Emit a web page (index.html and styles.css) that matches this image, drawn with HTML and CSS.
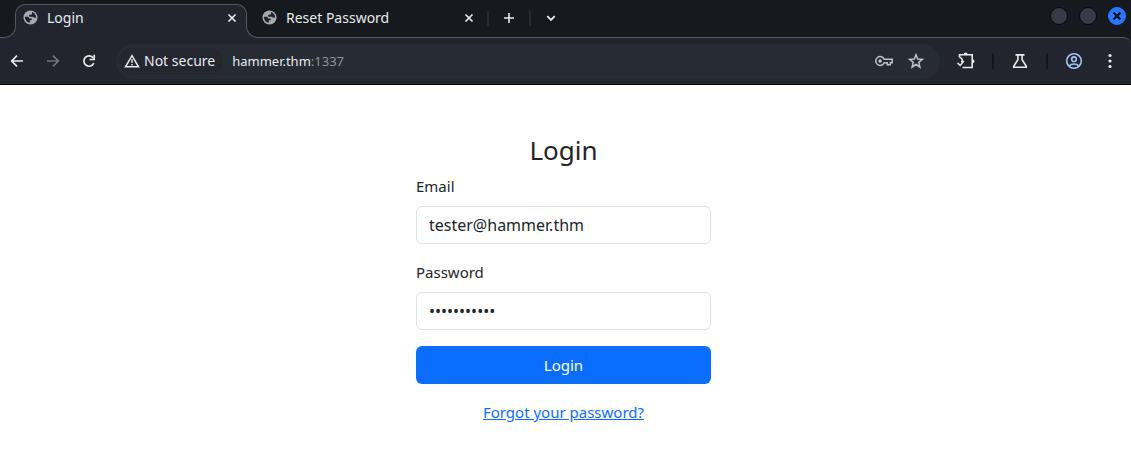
FILE: index.html
```html
<!DOCTYPE html>
<html lang="en">
<head>
<meta charset="utf-8">
<title>Login</title>
<link rel="stylesheet" href="styles.css">
</head>
<body>
<svg class="defs" aria-hidden="true">
  <symbol id="globe" viewBox="0 0 16 16">
    <circle cx="8" cy="8" r="7.500" fill="#a6abb3"/>
    <path d="M2 7.300h2.300c1.500 0 2.200.7 2.200 1.800h2.700v1.700H7.300v2.700C4.500 13.500 2 11 2 7.300z" fill="#20232a"/>
    <path d="M9.600 2.200c2.500.8 4.300 3 4.400 5.500-1 .8-2.600.8-3.300-.5H7.300c-1 0-1.400-1.500-.4-2.100h1.700c.8 0 1-.7 1-1.300z" fill="#20232a"/>
  </symbol>
  <symbol id="close" viewBox="0 0 10 10">
    <path d="M1.500 1.500l7 7M8.500 1.500l-7 7" fill="none" stroke="currentColor" stroke-width="1.700"/>
  </symbol>
</svg>

<header class="browser">
  <div class="tabstrip">
    <div class="tab tab-active">
      <svg class="favicon"><use href="#globe"/></svg>
      <span class="tab-title">Login</span>
      <button class="tab-close" aria-label="Close Login tab"><svg width="10" height="10"><use href="#close"/></svg></button>
    </div>
    <div class="tab">
      <svg class="favicon"><use href="#globe"/></svg>
      <span class="tab-title">Reset Password</span>
      <button class="tab-close" aria-label="Close Reset Password tab"><svg width="10" height="10"><use href="#close"/></svg></button>
    </div>
    <span class="strip-rule"></span>
    <button class="strip-button" aria-label="New tab"><svg width="12" height="12" viewBox="0 0 12 12"><path d="M6 1v10M1 6h10" stroke="currentColor" stroke-width="1.600"/></svg></button>
    <span class="strip-rule"></span>
    <button class="strip-button" aria-label="Search tabs"><svg width="12" height="12" viewBox="0 0 12 12"><path d="M2.300 4.200L6 7.900l3.700-3.700" fill="none" stroke="currentColor" stroke-width="1.800"/></svg></button>
    <div class="window-controls">
      <button class="window-dot" aria-label="Minimize"></button>
      <button class="window-dot" aria-label="Maximize"></button>
      <button class="window-dot window-close" aria-label="Close window"><svg width="10" height="10" viewBox="0 0 10 10"><path d="M1.500 1.500l7 7M8.500 1.500l-7 7" stroke="#0b1220" stroke-width="2.400"/></svg></button>
    </div>
  </div>

  <div class="toolbar">
    <nav class="history">
      <button class="nav-button" aria-label="Back"><svg width="14" height="14" viewBox="0 0 14 14"><path d="M13 7H2M7 1.700L1.700 7 7 12.300" fill="none" stroke="currentColor" stroke-width="1.700"/></svg></button>
      <button class="nav-button nav-disabled" aria-label="Forward"><svg width="14" height="14" viewBox="0 0 14 14"><path d="M1 7h11M7 1.700L12.300 7 7 12.300" fill="none" stroke="currentColor" stroke-width="1.700"/></svg></button>
      <button class="nav-button" aria-label="Reload"><svg width="14" height="14" viewBox="0 0 14 14"><path d="M11.800 9.200A5.200 5.200 0 1 1 11.300 4" fill="none" stroke="currentColor" stroke-width="1.700"/><path d="M12.200.8v4.700H7.600" fill="none" stroke="currentColor" stroke-width="1.700"/></svg></button>
    </nav>
    <div class="omnibox">
      <button class="site-chip">
        <svg width="16" height="14" viewBox="0 0 16 14"><path d="M8 1.700L14.500 12.800h-13z" fill="none" stroke="currentColor" stroke-width="1.500"/><path d="M8 5.300v3.600M8 9.900v1.500" stroke="currentColor" stroke-width="1.400"/></svg>
        Not secure
      </button>
      <span class="url">hammer.thm<span class="port">:1337</span></span>
      <button class="omni-action" aria-label="Passwords"><svg width="18" height="12" viewBox="0 0 18 12"><path d="M9.200 4.300A4.400 4.400 0 1 0 9.200 7.700h3.100v2h3v-2h1.900V4.300z" fill="none" stroke="currentColor" stroke-width="1.500"/><circle cx="5.100" cy="6" r="1.800" fill="currentColor"/></svg></button>
      <button class="omni-action" aria-label="Bookmark"><svg width="16" height="16" viewBox="0 0 16 16"><path d="M8 1.800l1.700 4.300 4.700.3-3.600 3 1.100 4.600L8 11.500 4.100 14l1.100-4.600-3.600-3 4.700-.3z" fill="none" stroke="currentColor" stroke-width="1.500"/></svg></button>
    </div>
    <button class="tool-button" aria-label="Extensions"><svg width="20" height="20" viewBox="0 0 20 20"><path d="M3.500 6.200V3.800h12.700v12.700H6.500" fill="none" stroke="currentColor" stroke-width="1.600"/><path d="M3.500 6.200c2.700.6 3.500 3.400 1.900 5.200M1.500 12l2.700 2.400 3.700-4.300" fill="none" stroke="currentColor" stroke-width="1.600"/><path d="M7.600 3.500a2 2 0 0 1 4 0zM16.500 8.200a2 2 0 0 1 0 4z" fill="currentColor"/></svg></button>
    <span class="tool-rule"></span>
    <button class="tool-button" aria-label="Labs"><svg width="16" height="16" viewBox="0 0 16 16"><path d="M3.500 1.900h9M5.900 2v4.700L1.700 13.300v.9h12.600v-.9L10.100 6.700V2" fill="none" stroke="currentColor" stroke-width="1.600"/></svg></button>
    <span class="tool-rule"></span>
    <button class="tool-button profile" aria-label="Profile"><svg width="18" height="18" viewBox="0 0 18 18"><g fill="none" stroke="currentColor" stroke-width="1.600"><circle cx="9" cy="9" r="7.300"/><circle cx="9" cy="7.200" r="2.300"/><path d="M4.100 14c2.200-2.600 7.600-2.600 9.800 0"/></g></svg></button>
    <button class="menu-button" aria-label="Menu"><svg width="4" height="16" viewBox="0 0 4 16" fill="currentColor"><circle cx="2" cy="2.500" r="1.600"/><circle cx="2" cy="8" r="1.600"/><circle cx="2" cy="13.500" r="1.600"/></svg></button>
  </div>
</header>

<main class="page">
  <form class="login">
    <h2 class="login-title">Login</h2>
    <div class="field">
      <label class="field-label" for="email">Email</label>
      <input class="field-input" id="email" type="email" value="tester@hammer.thm">
    </div>
    <div class="field">
      <label class="field-label" for="password">Password</label>
      <input class="field-input" id="password" type="password" value="hammer12345">
    </div>
    <button class="submit" type="submit">Login</button>
    <a class="forgot" href="#">Forgot your password?</a>
  </form>
</main>
</body>
</html>
```

FILE: styles.css
```css
* {
  box-sizing: border-box;
}

body {
  margin: 0;
  background: #fff;
  color: #212529;
  font-family: "Noto Sans", "Open Sans", sans-serif;
  font-size: 15px;
  line-height: 24px;
}

button,
input {
  font: inherit;
  color: inherit;
}

button {
  display: flex;
  align-items: center;
  justify-content: center;
  padding: 0;
  border: 0;
  background: none;
}

svg {
  flex: none;
}

.defs {
  position: absolute;
  width: 0;
  height: 0;
}

.browser {
  background: #16191e;
  color: #e8eaed;
  font-size: 14px;
  line-height: 20px;
  border-bottom: 1px solid #000;
}

/* Tab strip */
.tabstrip {
  display: flex;
  align-items: center;
  height: 37px;
  padding: 4px 5px 0 15px;
}

.tab {
  display: flex;
  align-items: center;
  width: 232px;
  height: 33px;
  padding: 0 6px 6px 7px;
}

.tab-active {
  position: relative;
  height: 34px;
  margin-bottom: -1px;
  padding-bottom: 8px;
  background: #22252d;
  border: 1px solid #55585e;
  border-bottom: 0;
  border-radius: 10px 10px 0 0;
}

/* Curved feet joining the active tab to the toolbar */
.tab-active::before,
.tab-active::after {
  content: "";
  position: absolute;
  bottom: 0;
  width: 13px;
  height: 13px;
  background: #16191e;
  border-bottom: 1px solid #55585e;
  clip-path: inset(0);
}

.tab-active::before {
  right: 100%;
  border-right: 1px solid #55585e;
  border-bottom-right-radius: 12px;
  box-shadow: 5px 5px 0 4px #22252d;
}

.tab-active::after {
  left: 100%;
  border-left: 1px solid #55585e;
  border-bottom-left-radius: 12px;
  box-shadow: -5px 5px 0 4px #22252d;
}

.tab-active + .tab {
  width: 240px;
  padding: 0 10px 6px 15px;
}

.favicon {
  width: 15px;
  height: 15px;
}

.tab-title {
  flex: 1;
  margin-left: 9px;
}

.tab-close {
  width: 16px;
  height: 16px;
}

.strip-rule {
  width: 2px;
  height: 15px;
  margin-bottom: 5px;
  background: #272a30;
}

.strip-button {
  width: 40px;
  height: 28px;
  margin-bottom: 5px;
}

.window-controls {
  display: flex;
  gap: 11px;
  margin-left: auto;
  margin-bottom: 9px;
}

.window-dot {
  width: 18px;
  height: 18px;
  border: 1px solid #06070a;
  border-radius: 50%;
  background: #383b46;
}

.window-close {
  border-color: #2777ff;
  background: #2777ff;
}

/* Toolbar */
.toolbar {
  display: flex;
  align-items: center;
  gap: 10px;
  height: 47px;
  padding-right: 11px;
  background: #22252d;
  border-top: 1px solid #55585e;
  border-top-right-radius: 8px;
}

.history {
  display: flex;
  gap: 2px;
}

.nav-button {
  width: 34px;
  height: 34px;
}

.nav-disabled {
  color: #72757b;
}

.omnibox {
  display: flex;
  align-items: center;
  flex: 1;
  height: 35px;
  padding: 0 8px 0 3px;
  border-radius: 18px;
  background: #272b33;
}

.site-chip {
  gap: 4px;
  height: 27px;
  padding: 0 8px 0 5px;
  border-radius: 14px;
  background: #24272f;
}

.url {
  flex: 1;
  margin-left: 9px;
  font-size: 13px;
}

.port {
  color: #8f939a;
}

.omni-action {
  width: 32px;
  height: 32px;
  color: #c0c2c5;
}

.tool-button {
  width: 32px;
  height: 32px;
}

.tool-rule {
  width: 2px;
  height: 16px;
  background: #14161b;
}

.profile {
  color: #a3c2f7;
}

.menu-button {
  width: 20px;
  height: 32px;
}

/* Page */
.page {
  display: flex;
  justify-content: center;
  padding: 48px 16px 16px 12px;
}

.login {
  display: flex;
  flex-direction: column;
  flex: 0 1 295px;
}

.login-title {
  margin: 0 0 7px;
  font-size: 26px;
  font-weight: 400;
  line-height: 34px;
  text-align: center;
}

.field {
  display: flex;
  flex-direction: column;
  gap: 8px;
  margin-bottom: 16px;
}

.field-input {
  width: 100%;
  height: 38px;
  padding: 0 12px;
  border: 1px solid #dce2e5;
  border-radius: 6px;
  background: #fff;
  font-size: 16px;
}

.submit {
  height: 38px;
  border-radius: 6px;
  background: #0b6dfd;
  color: #fff;
}

.forgot {
  align-self: center;
  margin-top: 16px;
  color: #0b6dfd;
}
```
